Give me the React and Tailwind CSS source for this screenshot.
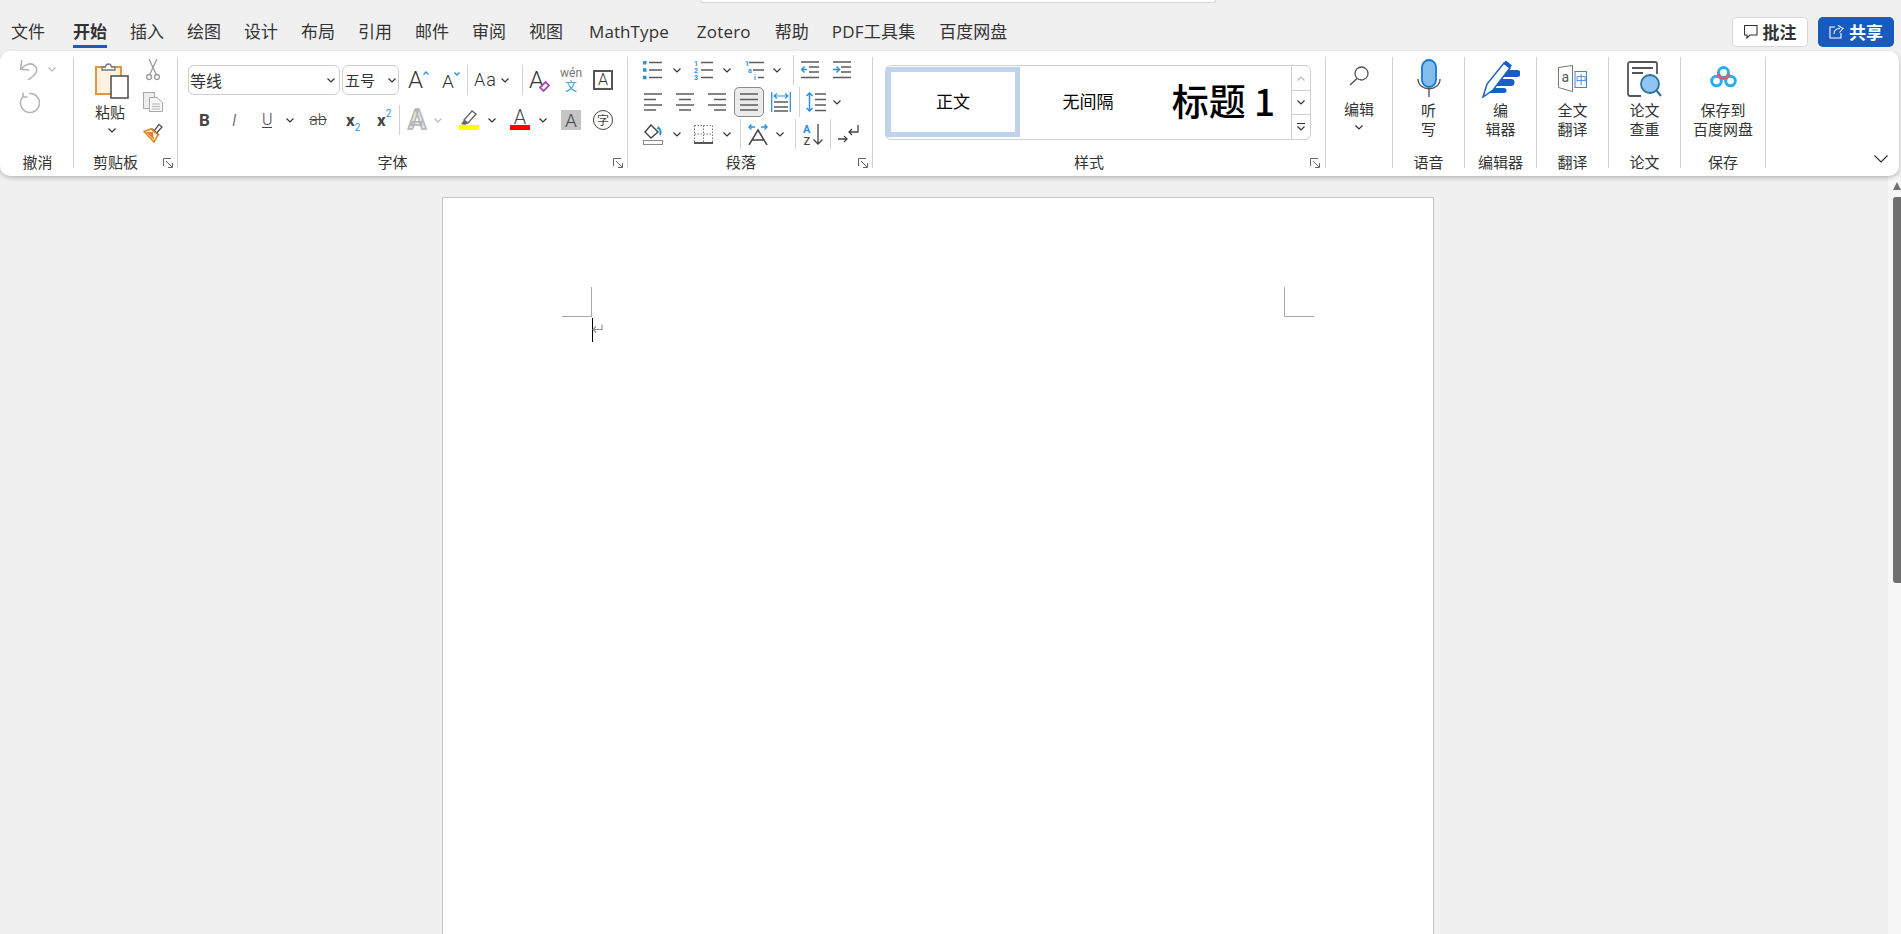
import React from 'react';

const tabs = [
  { name: '文件', cls: '' },
  { name: '开始', cls: 'ml-[5px] font-bold', active: true },
  { name: '插入', cls: '' },
  { name: '绘图', cls: '' },
  { name: '设计', cls: '' },
  { name: '布局', cls: '' },
  { name: '引用', cls: '' },
  { name: '邮件', cls: '' },
  { name: '审阅', cls: '' },
  { name: '视图', cls: '' },
  { name: 'MathType', cls: 'ml-[3px] tracking-[0.1px]' },
  { name: 'Zotero', cls: 'ml-[5px] tracking-[0.2px]' },
  { name: '帮助', cls: 'ml-[1px]' },
  { name: 'PDF工具集', cls: 'tracking-[0.2px]' },
  { name: '百度网盘', cls: 'ml-[1px]' },
];

const gray = '#5c5c5c';
const blue = '#2a93dc';

function Chev({ className = '', color = '#333' }) {
  return (
    <svg width="8" height="5" viewBox="0 0 8 5" fill="none" className={`shrink-0 ${className}`}>
      <path d="M0.5 0.5L4 4L7.5 0.5" stroke={color} strokeWidth="1.2" />
    </svg>
  );
}

function Sep({ className = '' }) {
  return <div className={`w-px h-[30px] bg-[#d2d2d2] shrink-0 ${className}`} />;
}

function Launcher({ className = '' }) {
  return (
    <svg width="10" height="10" viewBox="0 0 10 10" fill="none" className={`absolute bottom-0 ${className}`}>
      <path d="M0.5 8V0.5H8M3 3L9 9M9.5 5V9.5H5" stroke="#666" strokeWidth="1" />
    </svg>
  );
}

function Group({ width, label, pad = '', children, launcher }) {
  return (
    <div className={`relative flex flex-col h-[111px] shrink-0 border-r border-[#d2d2d2] ${width}`}>
      <div className="flex-1 min-h-0">{children}</div>
      <div className={`h-[14px] leading-[16px] text-center text-[15px] text-[#333] ${pad}`}>{label}</div>
      {launcher}
    </div>
  );
}

function BigButton({ icon, lines }) {
  return (
    <div className="flex flex-col items-center">
      <div className="h-[43px] flex items-center justify-center">{icon}</div>
      <div className="text-[15px] leading-[19px] text-center text-[#333]">
        {lines.map((line) => (
          <div key={line}>{line}</div>
        ))}
      </div>
    </div>
  );
}

function Lines({ w = 18, ys, xs, className = '' }) {
  return (
    <svg width={w} height="18" viewBox={`0 0 ${w} 18`} fill="none" className={`shrink-0 ${className}`}>
      {ys.map((y, i) => (
        <path key={y} d={`M${xs[i][0]} ${y}H${xs[i][1]}`} stroke={gray} strokeWidth="1.5" />
      ))}
    </svg>
  );
}

function BulletIcon({ className }) {
  return (
    <svg width="19" height="20" viewBox="0 0 19 20" fill="none" className={`shrink-0 ${className}`}>
      <path d="M6 2.5H19M6 10H19M6 17.5H19" stroke={gray} strokeWidth="1.5" />
      <path d="M0 1h3.5v3.5H0zM0 8.2h3.5v3.5H0zM0 15.7h3.5v3.5H0z" fill={blue} />
    </svg>
  );
}

function NumberIcon({ className }) {
  return (
    <svg width="19" height="20" viewBox="0 0 19 20" fill="none" className={`shrink-0 overflow-visible ${className}`}>
      <path d="M7 2.5H19M7 10H19M7 17.5H19" stroke={gray} strokeWidth="1.5" />
      <text x="0" y="5.5" fontSize="7" fontWeight="700" fill={blue} fontFamily="Roboto">1</text>
      <text x="0" y="12.5" fontSize="7" fontWeight="700" fill={blue} fontFamily="Roboto">2</text>
      <text x="0" y="20" fontSize="7" fontWeight="700" fill={blue} fontFamily="Roboto">3</text>
    </svg>
  );
}

function MultiIcon({ className }) {
  return (
    <svg width="19" height="20" viewBox="0 0 19 20" fill="none" className={`shrink-0 overflow-visible ${className}`}>
      <path d="M4 2.5H19M8 10H19M13 17.5H19" stroke={gray} strokeWidth="1.5" />
      <text x="0" y="5.5" fontSize="7" fontWeight="700" fill={blue} fontFamily="Roboto">1</text>
      <text x="3" y="12.5" fontSize="7" fontWeight="700" fill={blue} fontFamily="Roboto">a</text>
      <text x="9" y="20" fontSize="7" fontWeight="700" fill={blue} fontFamily="Roboto">i</text>
    </svg>
  );
}

function IndentIcon({ flip, className }) {
  return (
    <svg width="18" height="18" viewBox="0 0 18 18" fill="none" className={`shrink-0 ${className}`}>
      <path d="M0 1H18M8 6H18M8 11H18M0 16.5H18" stroke={gray} strokeWidth="1.5" />
      {flip ? (
        <path d="M0 8.5H6M3.5 5.5L6.5 8.5L3.5 11.5" stroke={blue} strokeWidth="1.5" />
      ) : (
        <path d="M6 8.5H0.5M3.5 5.5L0.5 8.5L3.5 11.5" stroke={blue} strokeWidth="1.5" />
      )}
    </svg>
  );
}

function DistIcon({ className }) {
  return (
    <svg width="20" height="20" viewBox="0 0 20 20" fill="none" className={`shrink-0 ${className}`}>
      <path d="M3 10H17M3 15H17M3 19H17" stroke={gray} strokeWidth="1.3" />
      <path d="M0.7 0V20M19.3 0V20" stroke={blue} strokeWidth="1.3" />
      <path d="M3 4H17M6 1.5L3 4L6 6.5M14 1.5L17 4L14 6.5" stroke={blue} strokeWidth="1.2" />
    </svg>
  );
}

function SpacingIcon({ className }) {
  return (
    <svg width="20" height="20" viewBox="0 0 20 20" fill="none" className={`shrink-0 ${className}`}>
      <path d="M9 2H20M9 7.5H20M9 13H20M9 18.5H20" stroke={gray} strokeWidth="1.5" />
      <path d="M3.5 1V19M0.5 4L3.5 1L6.5 4M0.5 16L3.5 19L6.5 16" stroke={blue} strokeWidth="1.5" />
    </svg>
  );
}

function ShadingIcon({ className }) {
  return (
    <svg width="20" height="21" viewBox="0 0 20 21" fill="none" className={`shrink-0 ${className}`}>
      <path d="M8 1L2 8L8 14L15 8Z" fill="#fff" stroke="#444" strokeWidth="1.4" />
      <path d="M15 4C18 5 18 9 17 11" stroke={blue} strokeWidth="2" />
      <path d="M15.5 2L13.5 5H17.5Z" fill={blue} />
      <rect x="0.5" y="16.5" width="19" height="4" stroke="#8a8a8a" />
    </svg>
  );
}

function BordersIcon({ className }) {
  return (
    <svg width="19" height="19" viewBox="0 0 19 19" fill="none" className={`shrink-0 ${className}`}>
      <path d="M0.5 0.5H18.5V17M0.5 0.5V17M9.5 0.5V17M0.5 9H18.5" stroke="#777" strokeDasharray="1.5 1.5" />
      <path d="M0 18H19" stroke="#444" strokeWidth="1.8" />
    </svg>
  );
}

function AsianIcon({ className }) {
  return (
    <svg width="20" height="21" viewBox="0 0 20 21" fill="none" className={`shrink-0 ${className}`}>
      <path d="M1 21L10 6L19 21M4.5 16H15.5" stroke="#444" strokeWidth="1.5" />
      <path d="M1 3H7M3.5 0.5L1 3L3.5 5.5M13 3H19M16.5 0.5L19 3L16.5 5.5" stroke={blue} strokeWidth="1.4" />
    </svg>
  );
}

function SortIcon({ className }) {
  return (
    <svg width="20" height="21" viewBox="0 0 20 21" fill="none" className={`shrink-0 overflow-visible ${className}`}>
      <text x="0" y="9" fontSize="11" fontWeight="700" fill={blue} fontFamily="Roboto">A</text>
      <text x="0.5" y="20.5" fontSize="11" fontWeight="500" fill="#444" fontFamily="Roboto">Z</text>
      <path d="M15 0V20M10.5 15.5L15 20L19.5 15.5" stroke="#444" strokeWidth="1.3" />
    </svg>
  );
}

function ReturnIcon({ className }) {
  return (
    <svg width="21" height="18" viewBox="0 0 21 18" fill="none" className={`shrink-0 ${className}`}>
      <path d="M20 0V7H11M14 4L11 7L14 10" stroke="#444" strokeWidth="1.3" />
      <path d="M0 14H9M6 11L9 14L6 17" stroke="#444" strokeWidth="1.3" />
    </svg>
  );
}

function UndoIcon() {
  return (
    <svg width="20" height="22" viewBox="0 0 20 22" fill="none" className="shrink-0">
      <path d="M2.7 2L1.7 11.3L10.3 12M1.7 11.3C6 6 12 4 16 8C20 12 17 17 9 22" stroke="#b4b4b4" strokeWidth="1.6" />
    </svg>
  );
}

function RedoIcon() {
  return (
    <svg width="22" height="22" viewBox="0 0 22 22" fill="none" className="shrink-0">
      <path d="M5 4.5A9.5 9.5 0 1 0 11 1.5M5 0.5V5H9.5" stroke="#b4b4b4" strokeWidth="1.6" />
    </svg>
  );
}

function PasteIcon() {
  return (
    <svg width="34" height="37" viewBox="0 0 34 37" fill="none">
      <rect x="1" y="5" width="25" height="27" fill="#fdf2df" stroke="#e8943a" strokeWidth="2" />
      <path d="M7 8V5H10.5C11 1 16 1 16.5 5H20V8Z" fill="#fff" stroke="#777" strokeWidth="1.3" />
      <rect x="16" y="14" width="17" height="22" fill="#fff" stroke="#555" strokeWidth="1.6" />
    </svg>
  );
}

function CutIcon() {
  return (
    <svg width="14" height="22" viewBox="0 0 14 22" fill="none">
      <path d="M3 0L10 15M11 0L4 15" stroke="#9a9a9a" strokeWidth="1.3" />
      <circle cx="3" cy="18" r="2.5" stroke="#9a9a9a" strokeWidth="1.3" />
      <circle cx="11" cy="18" r="2.5" stroke="#9a9a9a" strokeWidth="1.3" />
    </svg>
  );
}

function CopyIcon() {
  return (
    <svg width="20" height="20" viewBox="0 0 20 20" fill="none">
      <rect x="0.5" y="0.5" width="11" height="16" fill="#eee" stroke="#a8a8a8" />
      <path d="M6.5 5.5H14L19.5 10.5V19.5H6.5Z" fill="#f7f7f7" stroke="#a8a8a8" />
      <path d="M9 12H17M9 14.5H17M9 17H17" stroke="#b5b5b5" />
    </svg>
  );
}

function BrushIcon() {
  return (
    <svg width="20" height="20" viewBox="0 0 20 20" fill="none">
      <path d="M11 8L16 1.5L19 4L13.5 10" fill="#fff" stroke="#555" strokeWidth="1.3" />
      <path d="M8.5 5.5L16 12" stroke="#555" strokeWidth="1.6" />
      <path d="M8 6L1 8.5L11 19L15 12Z" fill="#fff" stroke="#e6841c" strokeWidth="1.6" />
      <path d="M3 9L11 17L10 9Z" fill="#e6841c" />
    </svg>
  );
}

function SearchIcon() {
  return (
    <svg width="20" height="20" viewBox="0 0 20 20" fill="none">
      <circle cx="12.5" cy="7.5" r="6.5" stroke="#555" strokeWidth="1.3" />
      <path d="M8 12.5L1 19" stroke="#555" strokeWidth="1.5" />
    </svg>
  );
}

function MicIcon() {
  return (
    <svg width="24" height="39" viewBox="0 0 24 39" fill="none">
      <rect x="5" y="1" width="14" height="27" rx="7" fill="#83bdee" stroke="#1478d4" strokeWidth="1.8" />
      <path d="M1 20C1 33 23 33 23 20" stroke="#555" strokeWidth="1.4" />
      <path d="M12 30V38" stroke="#555" strokeWidth="1.4" />
    </svg>
  );
}

function PenIcon() {
  return (
    <svg width="38" height="38" viewBox="0 0 38 38" fill="none">
      <path d="M19 10H35A3.5 3.5 0 0 1 35 17H19ZM13 19H29A3.5 3.5 0 0 1 29 26H13ZM8 28H22A2.5 2.5 0 0 1 22 33H8Z" fill="#1a5fc0" />
      <path d="M1 37L5 24L22 3L28 8L11 30Z" fill="#fff" stroke="#1a5fc0" strokeWidth="1.5" />
      <path d="M21 3.5L24 0.5L30 5.5L27.5 8.5Z" fill="#1a5fc0" />
    </svg>
  );
}

function TranslateIcon() {
  return (
    <svg width="29" height="27" viewBox="0 0 29 27" fill="none" className="overflow-visible">
      <path d="M0.5 2.5L14.5 0.5V26.5L0.5 22.5Z" fill="#fff" stroke="#777" />
      <text x="3.5" y="17" fontSize="14" fill="#555" fontFamily="Roboto">a</text>
      <rect x="17" y="6.5" width="11.5" height="16" stroke="#3f85d8" />
      <text x="17.5" y="19" fontSize="11" fill="#3f85d8" fontFamily="Noto Sans CJK SC">中</text>
    </svg>
  );
}

function PaperIcon() {
  return (
    <svg width="35" height="36" viewBox="0 0 35 36" fill="none">
      <path d="M14 35H3A2 2 0 0 1 1 33V3A2 2 0 0 1 3 1H28A2 2 0 0 1 30 3V13" stroke="#555" strokeWidth="1.8" />
      <path d="M5 7H26M5 12H16" stroke="#555" strokeWidth="2" />
      <circle cx="23" cy="23" r="9" fill="#8fc4f3" stroke="#2c7095" strokeWidth="1.8" />
      <path d="M29.5 29.5L34 35" stroke="#2c7095" strokeWidth="2" />
    </svg>
  );
}

function BaiduIcon() {
  return (
    <svg width="27" height="22" viewBox="0 0 27 22" fill="none" className="mb-[3px]">
      <circle cx="6.5" cy="15" r="4.8" stroke="#27aef0" strokeWidth="3" />
      <circle cx="20.5" cy="15" r="4.8" stroke="#27aef0" strokeWidth="3" />
      <circle cx="13.5" cy="6.5" r="5" stroke="#27aef0" strokeWidth="3" />
      <path d="M8.5 7.5A5 5 0 0 0 18.5 7.5" stroke="#f2536b" strokeWidth="3" />
    </svg>
  );
}

function App() {
  return (
    <div className="relative flex flex-col h-screen overflow-hidden bg-[#f0f0f0] font-['Noto_Sans_CJK_SC','Noto_Sans',sans-serif] text-[#333]">
      <div className="absolute top-0 left-[700px] w-[516px] h-[3px] bg-white border border-t-0 border-[#d4d4d4] rounded-b-[3px]" />

      {/* tab strip */}
      <div className="flex justify-between h-[51px] shrink-0">
        <div className="flex gap-[23px] pl-[11px] pt-[20px] text-[17px] leading-[24px] text-[#333] font-['Open_Sans','Noto_Sans_CJK_SC',sans-serif]">
          {tabs.map((tab) => (
            <div key={tab.name} className={`relative whitespace-nowrap ${tab.cls}`}>
              {tab.name}
              {tab.active && <div className="absolute left-0 right-0 top-[25px] h-[3px] bg-[#185abd]" />}
            </div>
          ))}
        </div>
        <div className="flex gap-[10px] pt-[17px] pr-[7px]">
          <div className="flex items-center justify-center gap-[5px] w-[76px] h-[30px] bg-white border border-[#d8d8d8] rounded-[5px] text-[17px] font-bold">
            <svg width="14" height="14" viewBox="0 0 14 14" fill="none">
              <path d="M0.5 0.5H13V10H6L3 13V10H0.5Z" stroke="#333" strokeWidth="1.1" />
            </svg>
            批注
          </div>
          <div className="flex items-center justify-center gap-[5px] w-[76px] h-[30px] bg-[#185abd] rounded-[5px] text-[17px] font-bold text-white">
            <svg width="15" height="14" viewBox="0 0 15 14" fill="none">
              <path d="M6 2H1V13H12V8M5 9C5 5 8 3.5 11 3.5M9 0.5L14 3.5L10.5 7.5" stroke="#fff" strokeWidth="1.1" />
            </svg>
            共享
          </div>
        </div>
      </div>

      {/* ribbon */}
      <div className="relative z-10 flex w-[1899px] h-[125px] shrink-0 pt-[6px] bg-white rounded-[10px] shadow-[0_2px_4px_rgba(0,0,0,0.22)]">
        <Group width="w-[74px]" label="撤消" pad="pl-[2px]">
          <div className="flex items-center pl-[19px] pt-[1px]">
            <UndoIcon />
            <Chev color="#b4b4b4" className="ml-[9px]" />
          </div>
          <div className="mt-[12px] pl-[18px]">
            <RedoIcon />
          </div>
        </Group>

        <Group width="w-[104px]" label="剪贴板" pad="pr-[20px]" launcher={<Launcher className="right-[4px]" />}>
          <div className="flex">
            <div className="flex flex-col items-center w-[76px] pt-[5px]">
              <PasteIcon />
              <div className="mt-[3px] pr-[4px] text-[15px] leading-[19px]">粘贴</div>
              <Chev className="mt-[7px]" />
            </div>
            <div className="flex flex-col items-center w-[20px] -ml-[7px] pt-[2px]">
              <div className="h-[22px] flex items-center"><CutIcon /></div>
              <div className="h-[22px] mt-[10px] flex items-center"><CopyIcon /></div>
              <div className="h-[22px] mt-[9px] flex items-center"><BrushIcon /></div>
            </div>
          </div>
        </Group>

        <Group width="w-[450px]" label="字体" pad="pr-[20px]" launcher={<Launcher className="right-[4px]" />}>
          <div className="flex items-center h-[30px] mt-[8px]">
            <div className="flex items-center justify-between ml-[10px] w-[152px] h-[30px] pl-[1px] pr-[4px] border border-[#cfcfcf] rounded-[6px] text-[16px]">
              等线
              <Chev />
            </div>
            <div className="flex items-center justify-between ml-[2px] w-[57px] h-[30px] pl-[2px] pr-[2px] border border-[#cfcfcf] rounded-[6px] text-[15px]">
              五号
              <Chev />
            </div>
            <div className="flex items-start ml-[9px] w-[20px] font-['Roboto',sans-serif] font-light text-[24px] leading-[24px] text-[#333]">
              A
              <svg width="6" height="4" viewBox="0 0 6 4" fill="none" className="mt-[3px] shrink-0">
                <path d="M0.5 3.5L3 1L5.5 3.5" stroke={blue} strokeWidth="1.4" />
              </svg>
            </div>
            <div className="flex items-start ml-[14px] w-[18px] pt-[3px] font-['Roboto',sans-serif] font-light text-[19px] leading-[20px] text-[#333]">
              A
              <svg width="6" height="4" viewBox="0 0 6 4" fill="none" className="shrink-0">
                <path d="M0.5 0.5L3 3L5.5 0.5" stroke={blue} strokeWidth="1.4" />
              </svg>
            </div>
            <Sep className="ml-[7px]" />
            <div className="ml-[6px] w-[21px] font-['Roboto',sans-serif] font-light text-[18px] leading-[20px] tracking-[1px] whitespace-nowrap">Aa</div>
            <Chev className="ml-[6px]" />
            <Sep className="ml-[13px]" />
            <div className="relative ml-[6px] w-[21px] h-[24px] font-['Roboto',sans-serif] font-light text-[24px] leading-[24px]">
              A
              <svg width="11" height="11" viewBox="0 0 11 11" fill="none" className="absolute right-0 bottom-0">
                <path d="M6.5 1L10 4.5L4.5 10L1 6.5Z" fill="#fff" stroke="#a64db3" strokeWidth="1.8" />
              </svg>
            </div>
            <div className="flex flex-col items-center ml-[10px] w-[22px]">
              <span className="font-['Roboto',sans-serif] text-[12px] leading-[11px] text-[#777]">wén</span>
              <span className="text-[12px] leading-[13px] text-[#2a9fe0]">文</span>
            </div>
            <div className="flex items-center justify-center ml-[11px] w-[20px] h-[20px] border-2 border-[#555] font-['Roboto',sans-serif] font-light text-[16px] leading-none">A</div>
          </div>

          <div className="flex items-center h-[30px] mt-[10px] font-['Roboto',sans-serif] text-[#444]">
            <div className="ml-[21px] w-[9px] text-[17px] font-bold leading-none">B</div>
            <div className="ml-[24px] w-[8px] text-[17px] font-light italic leading-none">I</div>
            <div className="ml-[22px] w-[10px] text-[16px] font-light leading-[15px] text-center border-b border-[#444]">U</div>
            <Chev className="ml-[14px]" />
            <div className="ml-[14px] w-[20px] text-[16px] font-light leading-none text-center line-through">ab</div>
            <div className="flex items-end ml-[18px] w-[13px] text-[17px] font-bold leading-none">
              x<span className="text-[10px] font-normal leading-[9px] text-[#2a93dc] -mb-[3px]">2</span>
            </div>
            <div className="flex items-start ml-[18px] w-[14px] text-[17px] font-bold leading-none">
              x<span className="text-[10px] font-normal leading-[9px] text-[#2a93dc] -mt-[3px]">2</span>
            </div>
            <Sep className="ml-[8px]" />
            <div className="ml-[7px] w-[20px] text-[27px] font-bold leading-none text-center text-[#e6e6e6] [-webkit-text-stroke:1.5px_#b5b5b5]">A</div>
            <Chev color="#b8b8b8" className="ml-[7px]" />
            <div className="flex flex-col ml-[17px] w-[20px]">
              <svg width="20" height="15" viewBox="0 0 20 15" fill="none">
                <path d="M5 10L13 1L17 4L9 13Z" fill="#fff" stroke="#666" strokeWidth="1.3" />
                <path d="M2 14L5 10L9 13L6 15Z" fill="#666" />
              </svg>
              <div className="h-[5px] bg-[#ffff00]" />
            </div>
            <Chev className="ml-[9px]" />
            <div className="flex flex-col items-center ml-[14px] w-[20px]">
              <span className="text-[20px] font-light leading-[15px]">A</span>
              <div className="w-full h-[5px] bg-[#ff0000]" />
            </div>
            <Chev className="ml-[9px]" />
            <div className="flex items-center justify-center ml-[14px] w-[20px] h-[20px] bg-[#c4c4c4] text-[19px] font-light leading-none">A</div>
            <div className="flex items-center justify-center ml-[12px] w-[20px] h-[20px] rounded-full border border-[#444] font-['Noto_Sans_CJK_SC',sans-serif] text-[12px] leading-none">字</div>
          </div>
        </Group>

        <Group width="w-[245px]" label="段落" pad="pr-[18px]" launcher={<Launcher className="right-[4px]" />}>
          <div className="flex items-center h-[30px] -mt-[2px]">
            <BulletIcon className="ml-[15px]" />
            <Chev className="ml-[11px]" />
            <NumberIcon className="ml-[13px]" />
            <Chev className="ml-[10px]" />
            <MultiIcon className="ml-[14px]" />
            <Chev className="ml-[9px]" />
            <Sep className="ml-[12px]" />
            <IndentIcon className="ml-[7px]" />
            <IndentIcon flip className="ml-[14px]" />
          </div>
          <div className="flex items-center h-[30px] mt-[2px]">
            <Lines className="ml-[16px]" ys={[1, 6.5, 12, 17]} xs={[[0, 18], [0, 12], [0, 18], [0, 12]]} />
            <Lines className="ml-[14px]" ys={[1, 6.5, 12, 17]} xs={[[0, 18], [3, 15], [0, 18], [3, 15]]} />
            <Lines className="ml-[14px]" ys={[1, 6.5, 12, 17]} xs={[[0, 18], [6, 18], [0, 18], [6, 18]]} />
            <div className="flex items-center justify-center ml-[8px] w-[30px] h-[30px] bg-[#ebebeb] border border-[#8a8a8a] rounded-[5px]">
              <Lines ys={[1, 6.5, 12, 17]} xs={[[0, 18], [0, 18], [0, 18], [0, 18]]} />
            </div>
            <DistIcon className="ml-[7px]" />
            <Sep className="ml-[8px]" />
            <SpacingIcon className="ml-[6px]" />
            <Chev className="ml-[7px]" />
          </div>
          <div className="flex items-center h-[30px] mt-[2px]">
            <ShadingIcon className="ml-[15px]" />
            <Chev className="ml-[10px]" />
            <BordersIcon className="ml-[13px]" />
            <Chev className="ml-[10px]" />
            <Sep className="ml-[9px]" />
            <AsianIcon className="ml-[7px]" />
            <Chev className="ml-[8px]" />
            <Sep className="ml-[11px]" />
            <SortIcon className="ml-[7px]" />
            <Sep className="ml-[7px]" />
            <ReturnIcon className="ml-[7px]" />
          </div>
        </Group>

        <Group width="w-[453px]" label="样式" pad="pr-[20px]" launcher={<Launcher className="right-[5px]" />}>
          <div className="flex ml-[12px] w-[426px] h-[75px] mt-[8px] border border-[#cfcfcf] rounded-[6px]">
            <div className="flex items-center justify-center w-[134px] h-[70px] mt-[1px] pb-[3px] border-[5px] border-[#bfd3f0] text-[17px] text-black">正文</div>
            <div className="flex items-center justify-center w-[136px] pb-[3px] text-[17px] text-black">无间隔</div>
            <div className="flex flex-1 items-center justify-center pb-[4px] text-[37px] font-medium text-black whitespace-nowrap">标题 1</div>
            <div className="flex flex-col w-[19px] border-l border-[#cfcfcf]">
              <div className="flex items-center justify-center h-[25px] border-b border-[#cfcfcf]">
                <Chev color="#b8b8b8" className="rotate-180" />
              </div>
              <div className="flex items-center justify-center h-[24px] border-b border-[#cfcfcf]">
                <Chev />
              </div>
              <div className="flex flex-1 flex-col items-center justify-center gap-[2px]">
                <div className="w-[8px] h-px bg-[#333]" />
                <Chev />
              </div>
            </div>
          </div>
        </Group>

        <Group width="w-[67px]" label="">
          <div className="flex flex-col items-center">
            <div className="h-[38px] flex items-center"><SearchIcon /></div>
            <div className="mt-[4px] text-[15px] leading-[19px]">编辑</div>
            <Chev className="mt-[7px]" />
          </div>
        </Group>
        <Group width="w-[72px]" label="语音">
          <BigButton icon={<MicIcon />} lines={['听', '写']} />
        </Group>
        <Group width="w-[72px]" label="编辑器">
          <BigButton icon={<PenIcon />} lines={['编', '辑器']} />
        </Group>
        <Group width="w-[72px]" label="翻译">
          <BigButton icon={<TranslateIcon />} lines={['全文', '翻译']} />
        </Group>
        <Group width="w-[72px]" label="论文">
          <BigButton icon={<PaperIcon />} lines={['论文', '查重']} />
        </Group>
        <Group width="w-[85px]" label="保存">
          <BigButton icon={<BaiduIcon />} lines={['保存到', '百度网盘']} />
        </Group>

        <svg width="14" height="8" viewBox="0 0 14 8" fill="none" className="absolute left-[1874px] top-[104px]">
          <path d="M0.5 0.5L7 7L13.5 0.5" stroke="#333" strokeWidth="1.2" />
        </svg>
      </div>

      {/* document area */}
      <div className="flex flex-1 min-h-0">
        <div className="flex-1 pl-[442px] pt-[21px]">
          <div className="relative w-[992px] h-[1200px] bg-white border border-[#c6c6c6]">
            <div className="absolute left-[119px] top-[89px] w-[30px] h-[30px] border-r border-b border-[#a8a8a8]" />
            <div className="absolute left-[841px] top-[89px] w-[30px] h-[30px] border-l border-b border-[#a8a8a8]" />
            <div className="absolute left-[149px] top-[120px] w-px h-[24px] bg-black" />
            <svg width="11" height="10" viewBox="0 0 11 10" fill="none" className="absolute left-[149px] top-[126px]">
              <path d="M10 0.5V5.5H1M4 2.5L1 5.5L4 8.5" stroke="#909090" strokeWidth="1.2" />
            </svg>
          </div>
        </div>
        <div className="flex flex-col items-end w-[13px] shrink-0 bg-[#f6f6f6]">
          <svg width="8" height="8" viewBox="0 0 8 8" className="mt-[6px]">
            <path d="M4 0L8 8H0Z" fill="#707070" />
          </svg>
          <div className="w-[8px] h-[386px] mt-[7px] bg-[#6e6e6e] rounded-tl-[3px] rounded-bl-[3px]" />
        </div>
      </div>
    </div>
  );
}

export default App;
